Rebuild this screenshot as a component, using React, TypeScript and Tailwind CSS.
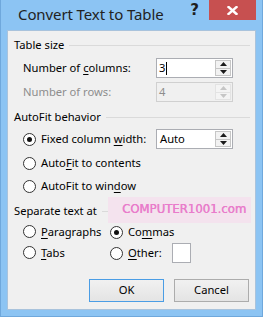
import React from "react";

function Radio({ checked }: { checked?: boolean }) {
  return (
    <span className="w-[13px] h-[13px] rounded-full border border-[#333333] bg-white flex items-center justify-center shrink-0">
      {checked ? <span className="w-[5px] h-[5px] rounded-full bg-[#111111]" /> : null}
    </span>
  );
}

function Arrow({ up, color }: { up?: boolean; color: string }) {
  return (
    <svg width="7" height="4" viewBox="0 0 7 4">
      {up ? <path d="M3.5 0 L7 4 L0 4Z" fill={color} /> : <path d="M0 0 L7 0 L3.5 4Z" fill={color} />}
    </svg>
  );
}

function Spinner({ disabled }: { disabled?: boolean }) {
  const c = disabled ? "#c6c6c6" : "#1a1a1a";
  return (
    <div
      className={
        disabled
          ? "w-[16px] my-[1px] mr-[1px] flex flex-col border border-[#e3e3e3] bg-[#f4f4f4]"
          : "w-[16px] my-[1px] mr-[1px] flex flex-col border border-[#c6c6c6] bg-[#f2f2f2]"
      }
    >
      <div
        className={
          disabled
            ? "flex-1 flex items-center justify-center border-b border-[#e3e3e3]"
            : "flex-1 flex items-center justify-center border-b border-[#c6c6c6]"
        }
      >
        <Arrow up color={c} />
      </div>
      <div className="flex-1 flex items-center justify-center">
        <Arrow color={c} />
      </div>
    </div>
  );
}

function GroupHeader({ text }: { text: string }) {
  return (
    <div className="h-[16px] flex items-center pl-[6px] pr-[5px]">
      <span className="leading-[16px]">{text}</span>
      <span className="flex-1 h-px bg-[#dadada] ml-[5px]" />
    </div>
  );
}

export default function App() {
  return (
    <div className="w-[263px] h-[317px] bg-[#8cc4f3] border-x border-b border-[#6fa8dc] flex flex-col font-['Noto_Sans',sans-serif] text-[11.2px] text-black">
      {/* title bar */}
      <div className="h-[30px] flex items-start">
        <div className="pl-[17px] h-[29px] flex items-center text-[15px] text-[#222222] tracking-[-0.1px]">
          Convert Text to Table
        </div>
        <div className="ml-auto mt-[2px] mr-[10px] text-[15px] font-bold leading-[16px] text-[#1e1e1e] font-['DejaVu_Sans',sans-serif]">
          ?
        </div>
        <div className="w-[47px] h-[20px] bg-[#c75050] mr-[6px] flex items-center justify-center">
          <svg width="11" height="9" viewBox="0 0 11 9">
            <path d="M1.5 1 L9.5 8 M9.5 1 L1.5 8" stroke="#ffffff" strokeWidth="2.4" strokeLinecap="square" />
          </svg>
        </div>
      </div>

      {/* client */}
      <div className="mx-[6px] h-[280px] bg-[#f0f0f0] border border-[#a9c3dc] relative flex flex-col">
        <div className="mt-[6px]">
          <GroupHeader text="Table size" />
        </div>

        <div className="mt-[5px] h-[20px] flex items-center pl-[15px]">
          <span className="w-[133px]">
            Number of <span className="underline underline-offset-2">c</span>olumns:
          </span>
          <div className="w-[77px] h-[20px] border border-[#abadb3] bg-white flex">
            <div className="flex-1 flex items-center pl-[2px]">
              <span>3</span>
              <span className="w-px h-[13px] bg-black ml-[1px]" />
            </div>
            <Spinner />
          </div>
        </div>

        <div className="mt-[4px] h-[20px] flex items-center pl-[15px] text-[#8d8d8d]">
          <span className="w-[133px]">Number of rows:</span>
          <div className="w-[77px] h-[20px] border border-[#d0d0d0] bg-[#f0f0f0] flex">
            <div className="flex-1 flex items-center pl-[2px]">4</div>
            <Spinner disabled />
          </div>
        </div>

        <div className="mt-[7px]">
          <GroupHeader text="AutoFit behavior" />
        </div>

        <div className="mt-[4px] h-[20px] flex items-center pl-[15px]">
          <Radio checked />
          <span className="ml-[5px] w-[115px]">
            Fixed column <span className="underline underline-offset-2">w</span>idth:
          </span>
          <div className="w-[77px] h-[20px] border border-[#abadb3] bg-white flex">
            <div className="flex-1 flex items-center pl-[3px]">Auto</div>
            <Spinner />
          </div>
        </div>

        <div className="mt-[4px] h-[20px] flex items-center pl-[15px]">
          <Radio />
          <span className="ml-[5px]">
            Auto<span className="underline underline-offset-2">F</span>it to contents
          </span>
        </div>

        <div className="mt-[3px] h-[20px] flex items-center pl-[15px]">
          <Radio />
          <span className="ml-[5px]">
            AutoFit to win<span className="underline underline-offset-2">d</span>ow
          </span>
        </div>

        <div className="mt-[7px]">
          <GroupHeader text="Separate text at" />
        </div>

        <div className="mt-[3px] h-[20px] flex items-center pl-[15px]">
          <div className="w-[87px] flex items-center">
            <Radio />
            <span className="ml-[5px]">
              <span className="underline underline-offset-2">P</span>aragraphs
            </span>
          </div>
          <Radio checked />
          <span className="ml-[5px]">
            Co<span className="underline underline-offset-2">m</span>mas
          </span>
        </div>

        <div className="mt-[1px] h-[20px] flex items-center pl-[15px]">
          <div className="w-[87px] flex items-center">
            <Radio />
            <span className="ml-[5px]">
              <span className="underline underline-offset-2">T</span>abs
            </span>
          </div>
          <Radio />
          <span className="ml-[5px] w-[44px]">
            <span className="underline underline-offset-2">O</span>ther:
          </span>
          <div className="w-[19px] h-[20px] border border-[#abadb3] bg-white" />
        </div>

        <div className="mt-[16px] flex justify-end pr-[6px] gap-[10px]">
          <div className="w-[75px] h-[23px] border border-[#4a9de5] bg-linear-to-b from-[#f1f1f1] to-[#e4e4e4] flex items-center justify-center">
            OK
          </div>
          <div className="w-[75px] h-[23px] border border-[#acacac] bg-linear-to-b from-[#f1f1f1] to-[#e4e4e4] flex items-center justify-center">
            Cancel
          </div>
        </div>

        {/* watermark overlay */}
        <div className="absolute left-[100px] top-[166px] w-[143px] h-[26px] bg-[#f4e3ee] flex items-center pl-[14px]">
          <span className="font-['DejaVu_Sans',sans-serif] text-[11.7px] whitespace-nowrap text-[#e97ccb] leading-none [text-shadow:0.4px_0_0_#e97ccb]">
            COMPUTER1001.com
          </span>
        </div>
      </div>
    </div>
  );
}
